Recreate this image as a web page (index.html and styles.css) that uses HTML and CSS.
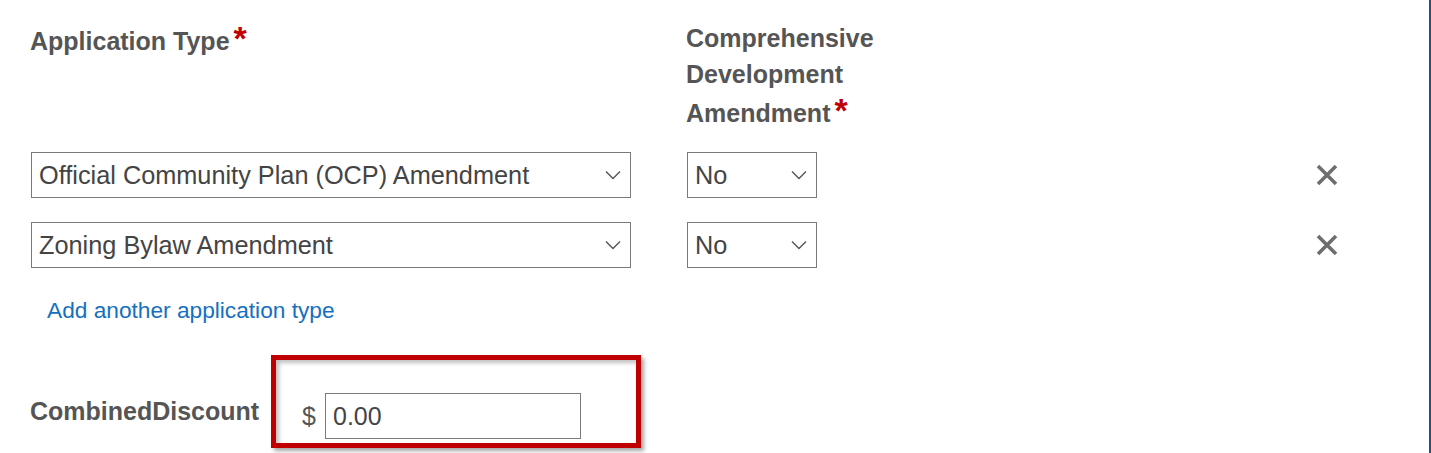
FILE: index.html
```html
<!DOCTYPE html>
<html lang="en">
<head>
    <meta charset="UTF-8">
    <meta name="viewport" content="width=device-width, initial-scale=1.0">
    <title>Application Type</title>
    <link rel="stylesheet" href="styles.css">
</head>
<body>
    <div id="form">
        <div class="labels">
            <div class="label type-label">Application Type<span class="req">*</span></div>
            <div class="label cd-label">Comprehensive Development Amendment<span class="req">*</span></div>
        </div>

        <div class="type-row">
            <div class="select type-select">
                <span>Official Community Plan (OCP) Amendment</span>
                <svg class="chevron" width="16" height="10" viewBox="0 0 16 10"><path d="M1 1.5 L8 8.5 L15 1.5" fill="none" stroke="#555" stroke-width="1.4"/></svg>
            </div>
            <div class="select cd-select">
                <span>No</span>
                <svg class="chevron" width="16" height="10" viewBox="0 0 16 10"><path d="M1 1.5 L8 8.5 L15 1.5" fill="none" stroke="#555" stroke-width="1.4"/></svg>
            </div>
            <button class="remove" title="Remove">
                <svg width="22" height="22" viewBox="0 0 22 22"><path d="M2 2 L20 20 M20 2 L2 20" stroke="#6e6e6e" stroke-width="3.6"/></svg>
            </button>
        </div>

        <div class="type-row">
            <div class="select type-select">
                <span>Zoning Bylaw Amendment</span>
                <svg class="chevron" width="16" height="10" viewBox="0 0 16 10"><path d="M1 1.5 L8 8.5 L15 1.5" fill="none" stroke="#555" stroke-width="1.4"/></svg>
            </div>
            <div class="select cd-select">
                <span>No</span>
                <svg class="chevron" width="16" height="10" viewBox="0 0 16 10"><path d="M1 1.5 L8 8.5 L15 1.5" fill="none" stroke="#555" stroke-width="1.4"/></svg>
            </div>
            <button class="remove" title="Remove">
                <svg width="22" height="22" viewBox="0 0 22 22"><path d="M2 2 L20 20 M20 2 L2 20" stroke="#6e6e6e" stroke-width="3.6"/></svg>
            </button>
        </div>

        <a class="add-link" href="#">Add another application type</a>

        <div class="discount-row">
            <div class="label discount-label">CombinedDiscount</div>
            <div class="highlight">
                <span class="currency">$</span>
                <div class="money-input">0.00</div>
            </div>
        </div>
    </div>
</body>
</html>
```

FILE: styles.css
```css
/* General Styles */
body {
    margin: 0;
    font-family: "Liberation Sans", Arial, sans-serif;
    background-color: #ffffff;
    color: #444444;
}

#form {
    box-sizing: border-box;
    width: 1431px;
    height: 453px;
    padding: 20px 0 0 30px;
    border-right: 2px solid #284f75;
    overflow: hidden;
}

/* Labels */
.labels {
    display: flex;
}

.label {
    font-size: 25px;
    font-weight: bold;
    line-height: 36px;
    color: #555555;
}

.type-label {
    width: 656px;
}

.cd-label {
    width: 200px;
}

.req {
    color: #c00000;
    font-size: 34px;
    line-height: 36px;
    margin-left: 4px;
    vertical-align: 0;
}

/* Select rows */
.type-row {
    display: flex;
    align-items: center;
    margin-top: 21px;
    margin-left: 1px;
}

.type-row + .type-row {
    margin-top: 24px;
}

.select {
    box-sizing: border-box;
    height: 46px;
    display: flex;
    align-items: center;
    justify-content: space-between;
    border: 1px solid #7a7a7a;
    padding: 0 9px 0 7px;
    font-size: 25.3px;
    color: #444444;
}

.type-select {
    width: 600px;
}

.cd-select {
    width: 130px;
    margin-left: 56px;
}

.remove {
    background: none;
    border: none;
    padding: 0;
    margin-left: 499px;
    width: 22px;
    height: 22px;
    cursor: pointer;
}

.remove svg {
    display: block;
}

/* Link */
.add-link {
    display: block;
    width: max-content;
    margin: 29px 0 0 17px;
    font-size: 22.7px;
    line-height: 26px;
    color: #1570c0;
    text-decoration: none;
}

/* Discount */
.discount-row {
    display: flex;
    align-items: flex-start;
    margin-top: 32px;
}

.discount-label {
    width: 241px;
    padding-top: 38px;
}

.highlight {
    display: flex;
    align-items: center;
    width: 370px;
    box-sizing: border-box;
    border: 5px solid #c00000;
    padding: 33px 0 4px 26px;
    box-shadow: 3px 3px 4px rgba(0, 0, 0, 0.35), inset 3px 3px 4px rgba(0, 0, 0, 0.25);
}

.currency {
    font-size: 25px;
    color: #555555;
    width: 23px;
}

.money-input {
    box-sizing: border-box;
    width: 256px;
    height: 46px;
    border: 1px solid #7a7a7a;
    padding-left: 7px;
    font-size: 25px;
    line-height: 44px;
    color: #444444;
}
```
